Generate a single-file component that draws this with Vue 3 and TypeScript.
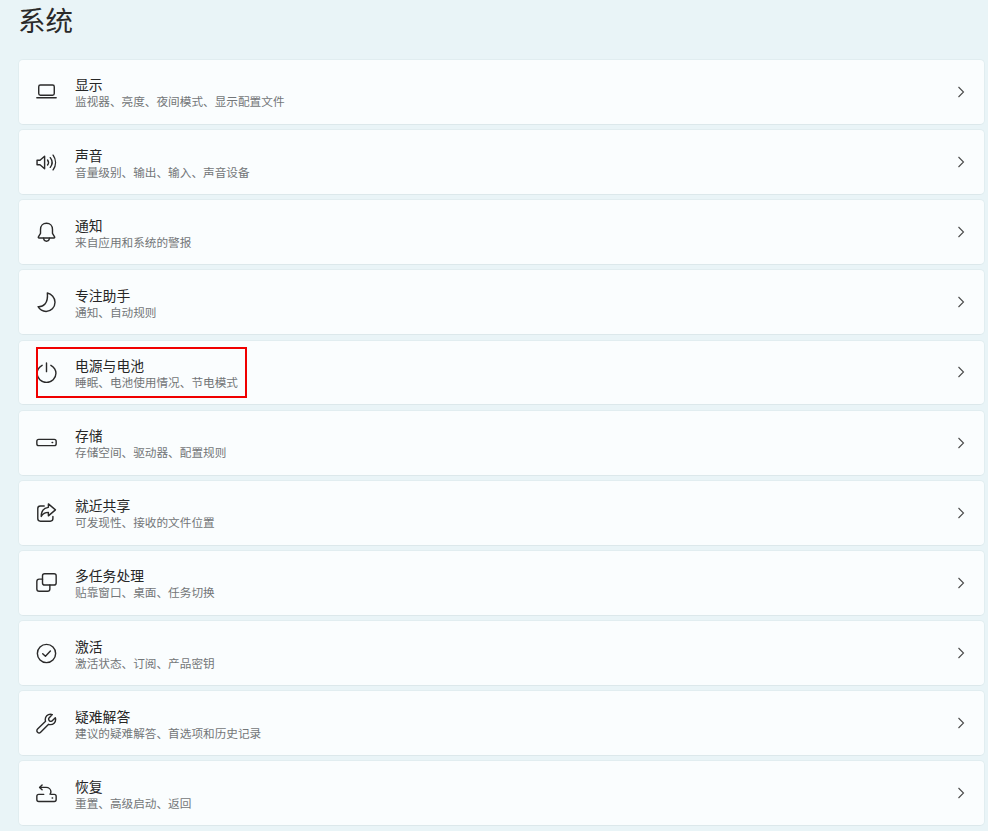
<script setup lang="ts">
interface Row { id: string; title: string; sub: string; marked?: boolean }
const rows: Row[] = [
  { id: 'display', title: '显示', sub: '监视器、亮度、夜间模式、显示配置文件' },
  { id: 'sound', title: '声音', sub: '音量级别、输出、输入、声音设备' },
  { id: 'bell', title: '通知', sub: '来自应用和系统的警报' },
  { id: 'moon', title: '专注助手', sub: '通知、自动规则' },
  { id: 'power', title: '电源与电池', sub: '睡眠、电池使用情况、节电模式', marked: true },
  { id: 'storage', title: '存储', sub: '存储空间、驱动器、配置规则' },
  { id: 'share', title: '就近共享', sub: '可发现性、接收的文件位置' },
  { id: 'multi', title: '多任务处理', sub: '贴靠窗口、桌面、任务切换' },
  { id: 'check', title: '激活', sub: '激活状态、订阅、产品密钥' },
  { id: 'wrench', title: '疑难解答', sub: '建议的疑难解答、首选项和历史记录' },
  { id: 'recover', title: '恢复', sub: '重置、高级启动、返回' },
]
</script>

<template>
  <div class="page">
    <h1 class="title">系统</h1>
    <div class="list">
      <div v-for="r in rows" :key="r.id" class="card">
        <svg class="icon" width="21" height="21" viewBox="0 0 20 20" fill="none" stroke="#2a2a2a" stroke-width="1.35" stroke-linecap="round" stroke-linejoin="round">
          <template v-if="r.id === 'display'">
            <rect x="2.6" y="3.8" width="14.8" height="9.8" rx="1.6" />
            <path d="M0.8 16H19.2" />
          </template>
          <template v-else-if="r.id === 'sound'">
            <path d="M1 7.800h2.800L8.200 4v12l-4.400-3.800H1z" />
            <path d="M11 7.600c1.100 1.400 1.100 3.400 0 4.800" />
            <path d="M13.600 5.400c2.100 2.700 2.100 6.500 0 9.200" />
            <path d="M16.300 3c3 4.200 3 9.800 0 14" />
          </template>
          <template v-else-if="r.id === 'bell'">
            <path d="M10 1.200c-3.400 0-5.700 2.600-5.700 5.900v3.700L2.300 14.200c-.3.600 0 1.100.6 1.100h14.200c.6 0 .9-.5.6-1.100l-2-3.400V7.100c0-3.300-2.300-5.900-5.700-5.900z" />
            <path d="M7.200 15.500c.2 1.700 1.300 2.800 2.800 2.800s2.600-1.100 2.800-2.800" />
          </template>
          <template v-else-if="r.id === 'moon'">
            <path d="M10.800 1c3.900.8 7.300 4.300 7.300 8.700 0 4.900-3.800 8.800-8.500 8.800-3.200 0-6-1.700-7.600-4.500 4.800.3 9.800-2.700 8.800-13z" />
          </template>
          <template v-else-if="r.id === 'power'">
            <path d="M10 1v8.200" />
            <path d="M5.800 3.200C3 4.800 1 7.600 1 10.800c0 4.800 4 8.700 9 8.700s9-3.900 9-8.700c0-3.200-2-6-4.800-7.600" />
          </template>
          <template v-else-if="r.id === 'storage'">
            <rect x="0.800" y="7" width="18.400" height="6" rx="1.800" />
            <path d="M15.400 10h.4" stroke-width="1.500" />
          </template>
          <template v-else-if="r.id === 'share'">
            <path d="M7.800 3.800H4.200c-1.500 0-2.500 1-2.500 2.500v9.500c0 1.500 1 2.500 2.500 2.500h9.400c1.500 0 2.500-1 2.500-2.500v-2" />
            <path d="M11.800 1.800l6.700 5.700-6.700 5.700V9.900c-3 0-5.200 1-6.800 3.800 0-4.900 2.400-8 6.800-8.600z" />
          </template>
          <template v-else-if="r.id === 'multi'">
            <rect x="6.200" y="1.600" width="13" height="10.800" rx="2" />
            <path d="M6.200 6.800H3c-1.200 0-2.200 1-2.200 2.200v7.200c0 1.200 1 2.200 2.200 2.200h8c1.200 0 2.200-1 2.200-2.200v-3.800" />
          </template>
          <template v-else-if="r.id === 'check'">
            <circle cx="10" cy="10" r="8.700" />
            <path d="M6.400 10.200l2.600 2.500 4.700-5" />
          </template>
          <template v-else-if="r.id === 'wrench'">
            <path d="M13.800 1.200c-2.900 0-5 2.300-5 5 0 .6.100 1.100.3 1.600L1.500 15.300c-.9.900-.9 2.200 0 3 .8.800 2.100.8 2.900 0l7.600-7.500c.5.200 1.100.3 1.700.3 2.800 0 5-2.200 5-5 0-.6-.1-1.100-.3-1.600l-3.400 3.300c-.8.300-1.700.1-2.300-.5-.6-.6-.8-1.500-.5-2.300l3.300-3.500c-.5-.2-1-.3-1.700-.3z" />
          </template>
          <template v-else-if="r.id === 'recover'">
            <path d="M5.800 1.800L3.400 4.200l2.400 2.300" />
            <path d="M3.600 4.200h6c2.600 0 4.600 1.800 4.600 4.100 0 1-.3 1.700-.8 2.400" />
            <path d="M7.400 10.800H2.600c-1 0-1.800.8-1.800 1.800v3.200c0 1 .8 1.800 1.800 1.800h14.800c1 0 1.800-.8 1.800-1.800v-3.200c0-1-.8-1.800-1.800-1.800h-3" />
            <path d="M15.400 14.300h.4" stroke-width="1.400" />
          </template>
        </svg>
        <div class="text">
          <div class="name">{{ r.title }}</div>
          <div class="sub">{{ r.sub }}</div>
        </div>
        <svg class="chev" width="8" height="12" viewBox="0 0 8 12" fill="none" stroke="#4a4a4a" stroke-width="1.100">
          <path d="M1.500 1l5 5-5 5" />
        </svg>
        <div v-if="r.marked" class="mark"></div>
      </div>
      <div class="card"></div>
    </div>
  </div>
</template>

<style>
html, body { margin: 0; background: #e9f4f7; }
</style>

<style scoped>
.page {
  width: 988px;
  height: 831px;
  overflow: hidden;
  background: #e9f4f7;
  font-family: "Liberation Sans", "Noto Sans CJK SC", sans-serif;
  padding-left: 18px;
  box-sizing: border-box;
}
.title {
  margin: 0;
  height: 59px;
  font-size: 27.5px;
  font-weight: 400;
  line-height: 43px;
  color: #2a2a2a;
}
.list {
  width: 967px;
  display: flex;
  flex-direction: column;
  gap: 4.35px;
}
.card {
  position: relative;
  flex: none;
  height: 65.8px;
  box-sizing: border-box;
  background: #fafdfe;
  border: 1px solid #e1edf0;
  border-bottom-color: #dce8eb;
  border-radius: 5px;
  display: flex;
  align-items: center;
  padding: 0 19px 0 17px;
}
.icon { flex: none; margin-right: 18px; }
.text { flex: 1; min-width: 0; padding-top: 3px; }
.name {
  font-size: 13.8px;
  line-height: 17px;
  color: #262626;
}
.sub {
  font-size: 11.65px;
  line-height: 15px;
  color: #737678;
}
.chev { flex: none; }
.mark {
  position: absolute;
  left: 17px;
  top: 6.4px;
  width: 211px;
  height: 51px;
  box-sizing: border-box;
  border: 2px solid #f00000;
}
</style>
